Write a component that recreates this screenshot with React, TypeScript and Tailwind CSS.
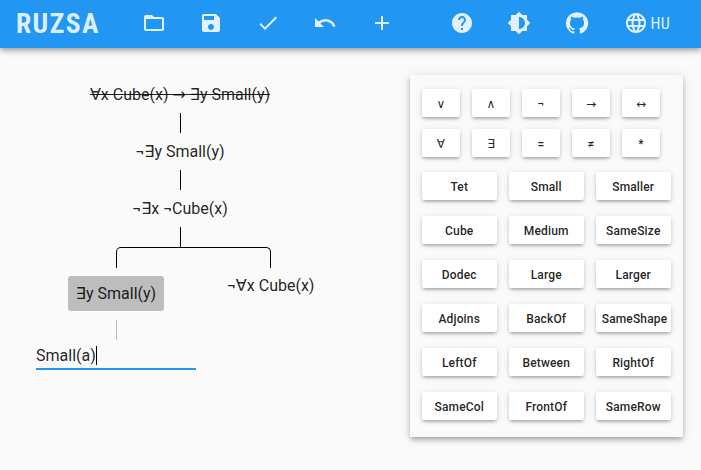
import type { ReactNode } from 'react';

const icons = {
  folder: 'M20 6h-8l-2-2H4c-1.1 0-1.99.9-1.99 2L2 18c0 1.1.9 2 2 2h16c1.1 0 2-.9 2-2V8c0-1.1-.9-2-2-2zm0 12H4V8h16v10z',
  save: 'M17 3H5c-1.11 0-2 .9-2 2v14c0 1.1.89 2 2 2h14c1.1 0 2-.9 2-2V7l-4-4zm-5 16c-1.66 0-3-1.34-3-3s1.34-3 3-3 3 1.34 3 3-1.34 3-3 3zm3-10H5V5h10v4z',
  check: 'M9 16.17L4.83 12l-1.42 1.41L9 19 21 7l-1.41-1.41z',
  undo: 'M12.5 8c-2.65 0-5.05.99-6.9 2.6L2 7v9h9l-3.62-3.62c1.39-1.16 3.16-1.88 5.12-1.88 3.54 0 6.55 2.31 7.6 5.5l2.37-.78C21.08 11.03 17.15 8 12.5 8z',
  add: 'M19 13h-6v6h-2v-6H5v-2h6V5h2v6h6v2z',
  help: 'M12 2C6.48 2 2 6.48 2 12s4.48 10 10 10 10-4.48 10-10S17.52 2 12 2zm1 17h-2v-2h2v2zm2.07-7.75l-.9.92C13.45 12.9 13 13.5 13 15h-2v-.5c0-1.1.45-2.1 1.17-2.83l1.24-1.26c.37-.36.59-.86.59-1.41 0-1.1-.9-2-2-2s-2 .9-2 2H8c0-2.21 1.79-4 4-4s4 1.79 4 4c0 .88-.36 1.68-.93 2.25z',
  brightness: 'M20 15.31L23.31 12 20 8.69V4h-4.69L12 .69 8.69 4H4v4.69L.69 12 4 15.31V20h4.69L12 23.31 15.31 20H20v-4.69zM12 18V6c3.31 0 6 2.69 6 6s-2.69 6-6 6z',
  github: 'M12 1.27a11 11 0 00-3.48 21.46c.55.09.73-.28.73-.55v-1.84c-3.03.64-3.67-1.46-3.67-1.46-.55-1.29-1.28-1.65-1.28-1.65-.92-.65.1-.65.1-.65 1.1 0 1.73 1.1 1.73 1.1.92 1.65 2.57 1.2 3.21.92a2 2 0 01.64-1.47c-2.47-.27-5.04-1.19-5.04-5.5 0-1.1.46-2.1 1.2-2.84a3.76 3.76 0 010-2.93s.91-.28 3.11 1.1c1.8-.49 3.7-.49 5.5 0 2.1-1.38 3.02-1.1 3.02-1.1a3.76 3.76 0 01.1 2.93c.83.74 1.2 1.74 1.2 2.94 0 4.21-2.57 5.13-5.04 5.4.45.37.82.92.82 2.02v3.03c0 .27.1.64.73.55A11 11 0 0012 1.27',
  globe: 'M11.99 2C6.47 2 2 6.48 2 12s4.47 10 9.99 10C17.52 22 22 17.52 22 12S17.52 2 11.99 2zm6.93 6h-2.95c-.32-1.25-.78-2.45-1.38-3.56 1.84.63 3.37 1.91 4.33 3.56zM12 4.04c.83 1.2 1.48 2.53 1.91 3.96h-3.82c.43-1.43 1.08-2.76 1.91-3.96zM4.26 14C4.1 13.36 4 12.69 4 12s.1-1.36.26-2h3.38c-.08.66-.14 1.32-.14 2 0 .68.06 1.34.14 2H4.26zm.82 2h2.95c.32 1.25.78 2.45 1.38 3.56-1.84-.63-3.37-1.9-4.33-3.56zm2.95-8H5.08c.96-1.66 2.49-2.93 4.33-3.56C8.81 5.55 8.35 6.75 8.03 8zM12 19.96c-.83-1.2-1.48-2.53-1.91-3.96h3.82c-.43 1.43-1.08 2.76-1.91 3.96zM14.34 14H9.66c-.09-.66-.16-1.32-.16-2 0-.68.07-1.35.16-2h4.68c.09.65.16 1.32.16 2 0 .68-.07 1.34-.16 2zm.25 5.56c.6-1.11 1.06-2.31 1.38-3.56h2.95c-.96 1.65-2.49 2.93-4.33 3.56zM16.36 14c.08-.66.14-1.32.14-2 0-.68-.06-1.34-.14-2h3.38c.16.64.26 1.31.26 2s-.1 1.36-.26 2h-3.38z',
};

function Icon({ name }: { name: keyof typeof icons }) {
  return (
    <svg viewBox="0 0 24 24" className="size-6 shrink-0 fill-current">
      <path d={icons[name]} />
    </svg>
  );
}

function Header() {
  return (
    <header className="flex h-12 items-center bg-[#2196f3] pb-0.5 text-white/87 shadow-[0_2px_4px_-1px_rgba(0,0,0,0.2),0_4px_5px_0_rgba(0,0,0,0.14),0_1px_10px_0_rgba(0,0,0,0.12)]">
      <h1 className="ml-4 w-[126px] pt-px text-[27.5px] leading-none font-bold tracking-[1.4px] [font-stretch:85%]">RUZSA</h1>
      <nav className="flex gap-[33px]">
        <Icon name="folder" />
        <Icon name="save" />
        <Icon name="check" />
        <Icon name="undo" />
        <Icon name="add" />
      </nav>
      <nav className="ml-[55.5px] flex items-center gap-[33.5px]">
        <Icon name="help" />
        <Icon name="brightness" />
        <Icon name="github" />
        <button className="ml-[1.5px] flex items-center gap-[3px]">
          <Icon name="globe" />
          <span className="pt-0.5 text-base leading-5 tracking-[0.3px] [font-stretch:85%]">HU</span>
        </button>
      </nav>
    </header>
  );
}

function Formula({ children, struck = false }: { children: ReactNode; struck?: boolean }) {
  return (
    <div className={struck ? 'h-[37px] pt-[9px] leading-[19px] line-through' : 'h-[37px] pt-[9px] leading-[19px]'}>
      {children}
    </div>
  );
}

function Stem() {
  return <div className="ml-px h-5 w-px bg-black" />;
}

function Tree() {
  return (
    <section className="flex w-[410px] flex-col pt-7 pl-9 text-base whitespace-nowrap">
      <div className="flex w-72 flex-col items-center">
        <Formula struck>∀x Cube(x) → ∃y Small(y)</Formula>
        <Stem />
        <Formula>¬∃y Small(y)</Formula>
        <Stem />
        <Formula>¬∃x ¬Cube(x)</Formula>
        <Stem />
      </div>
      <div className="ml-20 h-[21px] w-[155px] rounded-t-[5px] border border-b-0 border-black" />
      <div className="flex">
        <div className="flex w-40 flex-col items-center">
          <div className="mt-2 h-[35px] rounded-[3px] bg-[#bdbdbd] px-2 leading-[35px]">∃y Small(y)</div>
          <div className="mt-[9px] ml-px h-5 w-px bg-[#bdbdbd]" />
          <div className="flex h-[30px] w-40 items-center border-b-2 border-[#2196f3] pt-[3px]">
            <span>Small(a)</span>
            <span className="h-[19px] w-px bg-black" />
          </div>
        </div>
        <div className="ml-[31px] pt-2 leading-[19px]">¬∀x Cube(x)</div>
      </div>
    </section>
  );
}

const symbols = ['∨', '∧', '¬', '→', '↔', '∀', '∃', '=', '≠', '*'];
const predicates = [
  'Tet', 'Small', 'Smaller',
  'Cube', 'Medium', 'SameSize',
  'Dodec', 'Large', 'Larger',
  'Adjoins', 'BackOf', 'SameShape',
  'LeftOf', 'Between', 'RightOf',
  'SameCol', 'FrontOf', 'SameRow',
];

function Key({ label }: { label: string }) {
  return (
    <button className="flex h-7 items-center justify-center rounded-[2px] bg-white pt-0.5 text-xs font-medium tracking-[0.15px] shadow-[0_3px_3px_-2px_rgba(0,0,0,0.2),0_2px_3px_0_rgba(0,0,0,0.12),0_1px_6px_0_rgba(0,0,0,0.12)]">
      <span className={label === 'SameShape' ? 'pl-0.5' : label.length > 1 ? 'pr-[0.5px]' : undefined}>{label}</span>
    </button>
  );
}

function Keyboard() {
  return (
    <aside className="mt-[27px] h-[362px] w-[273px] bg-[#fafafa] px-3 pt-3.5 shadow-[0_2px_4px_-1px_rgba(0,0,0,0.2),0_4px_5px_0_rgba(0,0,0,0.14),0_1px_10px_0_rgba(0,0,0,0.12)]">
      <div className="grid grid-cols-[repeat(5,38px)] gap-3">
        {symbols.map((s) => <Key key={s} label={s} />)}
      </div>
      <div className="mt-[15px] grid grid-cols-[repeat(3,75px)] gap-x-3 gap-y-4">
        {predicates.map((p) => <Key key={p} label={p} />)}
      </div>
    </aside>
  );
}

export default function App() {
  return (
    <div className="h-[470px] w-[701px] overflow-hidden bg-[#fafafa] font-[Roboto,'DejaVu_Sans',sans-serif] text-black/87">
      <Header />
      <main className="flex items-start">
        <Tree />
        <Keyboard />
      </main>
    </div>
  );
}
